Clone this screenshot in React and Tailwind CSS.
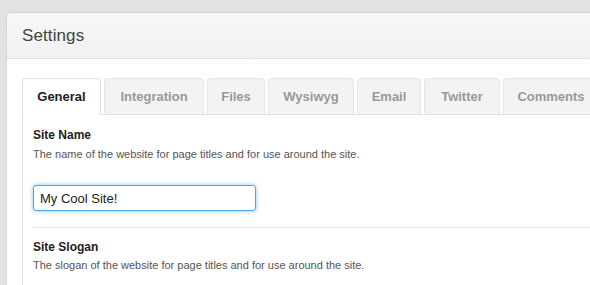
export default function App() {
  const tabs = [
    ["Integration", "w-[100px]"],
    ["Files", "w-[58px]"],
    ["Wysiwyg", "w-[86px]"],
    ["Email", "w-[64px]"],
    ["Twitter", "w-[76px]"],
    ["Comments", "w-[96px]"],
  ];
  return (
    <div
      className="w-[590px] h-[285px] overflow-hidden bg-[#e2e2e2] pt-[12px] pl-[6px]"
      style={{ fontFamily: '"Liberation Sans", Arial, sans-serif' }}
    >
      <div className="w-[620px] h-[300px] bg-white border border-[#d6d6d6] rounded-tl-[5px] overflow-hidden">
        <div className="h-[46px] bg-gradient-to-b from-[#f7f7f7] to-[#f1f1f1] border-b border-[#e3e3e3] flex items-center pl-[15px]">
          <span className="text-[17px] text-[#444] tracking-[0.1px]">Settings</span>
        </div>
        <div className="pt-[20px] pl-[15px]">
          <div className="flex items-end gap-[3px] border-b border-[#e1e1e1] h-[36px]">
            <div className="h-[37px] -mb-px w-[79px] shrink-0 bg-white border border-[#e1e1e1] border-b-white rounded-t-[4px] flex items-center justify-center text-[13px] font-bold text-[#222]">
              General
            </div>
            {tabs.map(([t, w]) => (
              <div
                key={t}
                className={`h-[36px] ${w} bg-[#f3f3f3] border border-[#e6e6e6] border-b-0 rounded-t-[4px] flex items-center justify-center text-[13px] font-bold text-[#999] shrink-0`}
              >
                {t}
              </div>
            ))}
          </div>
          <div className="border-l border-[#e1e1e1] pl-[10px] pt-[12px] h-[200px]">
            <div className="text-[12px] font-bold text-[#222] leading-[16px]">Site Name</div>
            <div className="text-[11px] text-[#555] leading-[14px] mt-[4px]">
              The name of the website for page titles and for use around the site.
            </div>
            <input
              readOnly
              value="My Cool Site!"
              className="mt-[24px] w-[223px] h-[26px] border border-[#4ea6ea] rounded-[3px] px-[6px] text-[13px] text-[#222] outline-none shadow-[0_0_4px_rgba(82,168,236,0.7)]"
              style={{ fontFamily: '"Liberation Sans", Arial, sans-serif' }}
            />
            <div className="border-t border-[#e6e6e6] mt-[16px] pt-[11px]">
              <div className="text-[12px] font-bold text-[#222] leading-[16px]">Site Slogan</div>
              <div className="text-[11px] text-[#555] leading-[14px] mt-[3px]">
                The slogan of the website for page titles and for use around the site.
              </div>
            </div>
          </div>
        </div>
      </div>
    </div>
  );
}
